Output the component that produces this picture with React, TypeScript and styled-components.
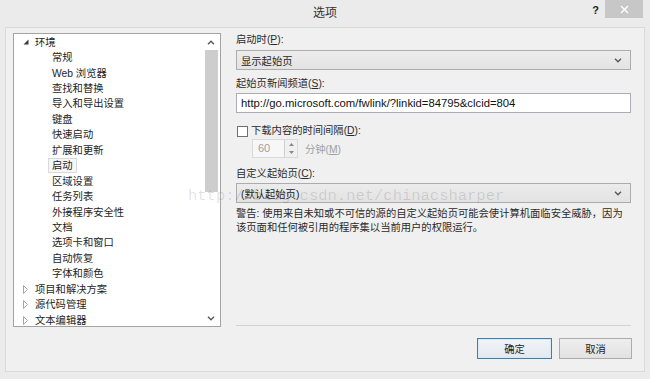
import React from 'react';
import styled, { createGlobalStyle } from 'styled-components';

const GlobalStyle = createGlobalStyle`
  html, body {
    margin: 0;
    padding: 0;
    background: #ebebeb;
  }
`;

const UI_FONT = `"Liberation Sans", "Noto Sans CJK SC", sans-serif`;

interface TreeNode {
  label: string;
  level: number;
  expander?: 'open' | 'closed';
  selected?: boolean;
}

const treeNodes: TreeNode[] = [
  { label: '环境', level: 0, expander: 'open' },
  { label: '常规', level: 1 },
  { label: 'Web 浏览器', level: 1 },
  { label: '查找和替换', level: 1 },
  { label: '导入和导出设置', level: 1 },
  { label: '键盘', level: 1 },
  { label: '快速启动', level: 1 },
  { label: '扩展和更新', level: 1 },
  { label: '启动', level: 1, selected: true },
  { label: '区域设置', level: 1 },
  { label: '任务列表', level: 1 },
  { label: '外接程序安全性', level: 1 },
  { label: '文档', level: 1 },
  { label: '选项卡和窗口', level: 1 },
  { label: '自动恢复', level: 1 },
  { label: '字体和颜色', level: 1 },
  { label: '项目和解决方案', level: 0, expander: 'closed' },
  { label: '源代码管理', level: 0, expander: 'closed' },
  { label: '文本编辑器', level: 0, expander: 'closed' },
];

const Window = styled.div`
  position: relative;
  width: 650px;
  height: 379px;
  display: flex;
  flex-direction: column;
  background: #ebebeb;
  font-family: ${UI_FONT};
  font-size: 10.3px;
  color: #222;
  overflow: hidden;
`;

const TitleBar = styled.div`
  height: 27px;
  display: grid;
  grid-template-columns: 1fr auto 1fr;
  align-items: start;
`;

const Title = styled.div`
  grid-column: 2;
  line-height: 27px;
  font-size: 12px;
  color: #333;
`;

const Controls = styled.div`
  grid-column: 3;
  justify-self: end;
  display: flex;
  align-items: flex-start;
  margin-right: 7px;
`;

const HelpButton = styled.div`
  margin: 4px 6px 0 0;
  font-size: 11px;
  font-weight: bold;
  line-height: 12px;
  color: #222;
`;

const CloseButton = styled.div`
  width: 38px;
  height: 18px;
  background: #c7c7c7;
  color: #fff;
  display: flex;
  align-items: center;
  justify-content: center;
`;

const Client = styled.div`
  flex: 1;
  margin: 0 5px 7px 5px;
  border: 1px solid #dadada;
  background: #f0f0f0;
  padding: 5px 12px 11px 7px;
  display: flex;
  flex-direction: column;
`;

const Main = styled.div`
  height: 294px;
  display: flex;
  gap: 15px;
`;

const Tree = styled.div`
  width: 208px;
  box-sizing: border-box;
  border: 1px solid #a3a3a3;
  background: #fff;
  display: flex;
`;

const TreeItems = styled.div`
  flex: 1;
  overflow: hidden;
  padding-top: 0.5px;
`;

const TreeRow = styled.div<{ $level: number }>`
  height: 15.44px;
  display: flex;
  align-items: center;
  padding-left: ${(p) => 8 + p.$level * 17}px;
  white-space: nowrap;
`;

const Expander = styled.span`
  width: 9px;
  display: flex;
  align-items: center;
`;

const TreeLabel = styled.span<{ $selected?: boolean }>`
  height: 15px;
  line-height: 14px;
  padding: 0 3px;
  box-sizing: border-box;
  border: 1px solid ${(p) => (p.$selected ? '#d9d9d9' : 'transparent')};
  background: ${(p) => (p.$selected ? '#f6f6f6' : 'transparent')};
  color: #1e1e1e;
`;

const ScrollBar = styled.div`
  width: 16px;
  display: flex;
  flex-direction: column;
`;

const ScrollArrow = styled.div`
  height: 16px;
  display: flex;
  align-items: center;
  justify-content: center;
  padding-right: 2px;
`;

const ScrollTrack = styled.div`
  flex: 1;
  display: flex;
  flex-direction: column;
`;

const ScrollThumb = styled.div`
  height: 142px;
  width: 13px;
  margin-left: 1px;
  background: #cdcdcd;
`;

const Panel = styled.div`
  flex: 1;
  margin-right: 1px;
  display: flex;
  flex-direction: column;
`;

const FieldLabel = styled.div<{ $gap: number }>`
  margin-top: ${(p) => p.$gap}px;
  height: 14px;
  line-height: 14px;
  color: #2a2a2a;
  white-space: nowrap;
`;

const Combo = styled.div<{ $gap: number }>`
  margin-top: ${(p) => p.$gap}px;
  height: 20px;
  box-sizing: border-box;
  border: 1px solid #acacac;
  background: linear-gradient(#ececec, #e3e3e3);
  display: flex;
  align-items: center;
  padding: 0 8px 0 4px;
  color: #1e1e1e;
`;

const ComboText = styled.span`
  flex: 1;
`;

const TextBox = styled.div`
  margin-top: 2px;
  height: 20px;
  box-sizing: border-box;
  border: 1px solid #abadb3;
  background: #fff;
  display: flex;
  align-items: center;
  padding: 0 4px;
  font-size: 11.3px;
  color: #111;
  white-space: nowrap;
`;

const CheckRow = styled.label`
  margin-top: 11px;
  height: 14px;
  display: flex;
  align-items: center;
  gap: 3px;
  line-height: 14px;
  color: #2a2a2a;
`;

const CheckBox = styled.span`
  width: 11px;
  height: 11px;
  margin-left: 1px;
  box-sizing: border-box;
  border: 1px solid #707070;
  background: #fff;
`;

const SpinRow = styled.div`
  margin-top: 1px;
  margin-left: 16px;
  height: 19px;
  display: flex;
  align-items: center;
  gap: 7px;
`;

const SpinBox = styled.div`
  width: 46px;
  height: 19px;
  box-sizing: border-box;
  border: 1px solid #d9d9d9;
  background: #f7f7f7;
  display: flex;
`;

const SpinValue = styled.span`
  flex: 1;
  padding-left: 5px;
  line-height: 17px;
  color: #a0a0a0;
  font-size: 11px;
`;

const SpinButtons = styled.div`
  width: 12px;
  display: flex;
  flex-direction: column;
  border-left: 1px solid #cfcfcf;
  background: #f0f0f0;
`;

const SpinHalf = styled.div`
  flex: 1;
  display: flex;
  align-items: center;
  justify-content: center;
`;

const Disabled = styled.span`
  color: #a0a0a0;
`;

const Warning = styled.div`
  margin-top: 4px;
  line-height: 14px;
  color: #2a2a2a;
  white-space: nowrap;
`;

const Separator = styled.div`
  margin-top: auto;
  margin-bottom: 1px;
  height: 1px;
  background: #d2d2d2;
`;

const Footer = styled.div`
  margin-top: 11px;
  display: flex;
  justify-content: flex-end;
  gap: 7px;
`;

const Button = styled.div<{ $default?: boolean; $width: number }>`
  width: ${(p) => p.$width}px;
  height: 21px;
  box-sizing: border-box;
  border: 1px solid ${(p) => (p.$default ? '#3c7fb1' : '#acacac')};
  background: ${(p) =>
    p.$default ? 'linear-gradient(#f0f4f8, #e3e9ef)' : 'linear-gradient(#eeeeee, #e2e2e2)'};
  box-shadow: ${(p) => (p.$default ? 'inset 0 0 0 1px #dbe8f4' : 'none')};
  display: flex;
  align-items: center;
  justify-content: center;
  color: #1e1e1e;
`;

const Watermark = styled.div`
  position: absolute;
  left: 188px;
  top: 187px;
  font-family: "Liberation Mono", monospace;
  font-size: 15.5px;
  line-height: 18px;
  color: rgba(0, 0, 0, 0.13);
  pointer-events: none;
  white-space: nowrap;
`;

const Chevron = ({ up }: { up?: boolean }) => (
  <svg width="8" height="5" viewBox="0 0 8 5">
    <polyline
      points={up ? '1,4.2 4,1.2 7,4.2' : '1,0.8 4,3.8 7,0.8'}
      fill="none"
      stroke="#555"
      strokeWidth="1.3"
    />
  </svg>
);

const OpenGlyph = () => (
  <svg width="6" height="6" viewBox="0 0 6 6" style={{ marginLeft: 1 }}>
    <polygon points="5.5,0.5 5.5,5.5 0.5,5.5" fill="#3a3a3a" />
  </svg>
);

const ClosedGlyph = () => (
  <svg width="6" height="9" viewBox="0 0 6 9" style={{ marginLeft: 1 }}>
    <polygon points="0.5,0.5 4.5,4.5 0.5,8.5" fill="#fff" stroke="#a6a6a6" />
  </svg>
);

const SpinArrow = ({ up }: { up?: boolean }) => (
  <svg width="5" height="3" viewBox="0 0 5 3">
    <polygon points={up ? '0,3 2.5,0 5,3' : '0,0 2.5,3 5,0'} fill="#8a8a8a" />
  </svg>
);

const toTreeRow = (node: TreeNode) => (
  <TreeRow key={node.label} $level={node.level}>
    <Expander>
      {node.expander === 'open' && <OpenGlyph />}
      {node.expander === 'closed' && <ClosedGlyph />}
    </Expander>
    <TreeLabel $selected={node.selected}>{node.label}</TreeLabel>
  </TreeRow>
);

export default function App() {
  return (
    <Window>
      <GlobalStyle />
      <TitleBar>
        <Title>选项</Title>
        <Controls>
          <HelpButton>?</HelpButton>
          <CloseButton>
            <svg width="9" height="9" viewBox="0 0 9 9">
              <path d="M1 1 L8 8 M8 1 L1 8" stroke="#fff" strokeWidth="1.4" />
            </svg>
          </CloseButton>
        </Controls>
      </TitleBar>

      <Client>
        <Main>
          <Tree>
            <TreeItems>{treeNodes.map(toTreeRow)}</TreeItems>
            <ScrollBar>
              <ScrollArrow>
                <Chevron up />
              </ScrollArrow>
              <ScrollTrack>
                <ScrollThumb />
              </ScrollTrack>
              <ScrollArrow>
                <Chevron />
              </ScrollArrow>
            </ScrollBar>
          </Tree>

          <Panel>
            <FieldLabel $gap={0}>
              启动时(<u>P</u>):
            </FieldLabel>
            <Combo $gap={3}>
              <ComboText>显示起始页</ComboText>
              <Chevron />
            </Combo>

            <FieldLabel $gap={7}>
              起始页新闻频道(<u>S</u>):
            </FieldLabel>
            <TextBox>http://go.microsoft.com/fwlink/?linkid=84795&amp;clcid=804</TextBox>

            <CheckRow>
              <CheckBox />
              <span>
                下载内容的时间间隔(<u>D</u>):
              </span>
            </CheckRow>
            <SpinRow>
              <SpinBox>
                <SpinValue>60</SpinValue>
                <SpinButtons>
                  <SpinHalf>
                    <SpinArrow up />
                  </SpinHalf>
                  <SpinHalf>
                    <SpinArrow />
                  </SpinHalf>
                </SpinButtons>
              </SpinBox>
              <Disabled>
                分钟(<u>M</u>)
              </Disabled>
            </SpinRow>

            <FieldLabel $gap={9}>
              自定义起始页(<u>C</u>):
            </FieldLabel>
            <Combo $gap={2}>
              <ComboText>(默认起始页)</ComboText>
              <Chevron />
            </Combo>

            <Warning>
              警告: 使用来自未知或不可信的源的自定义起始页可能会使计算机面临安全威胁，因为
              <br />
              该页面和任何被引用的程序集以当前用户的权限运行。
            </Warning>

            <Separator />
          </Panel>
        </Main>

        <Footer>
          <Button $default $width={75}>
            确定
          </Button>
          <Button $width={73}>取消</Button>
        </Footer>
      </Client>

      <Watermark>http://blog.csdn.net/chinacsharper</Watermark>
    </Window>
  );
}
